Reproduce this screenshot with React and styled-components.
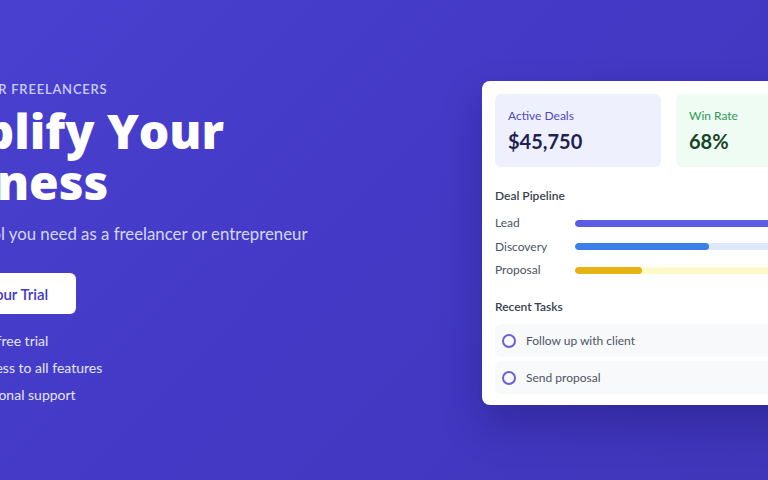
import React from "react";
import styled, { createGlobalStyle } from "styled-components";

const Global = createGlobalStyle`
  html, body { margin: 0; padding: 0; }
  body {
    font-family: Lato, "Open Sans", sans-serif;
    overflow: hidden;
  }
`;

const Hero = styled.section`
  width: 100vw;
  height: 480px;
  overflow: hidden;
  background: linear-gradient(135deg, #4a40cf 0%, #4339c6 50%, #3f36b9 100%);
  display: flex;
  align-items: center;
`;

const Container = styled.div`
  flex: none;
  display: flex;
  align-items: center;
  gap: 70px;
  margin-left: -108px;
  padding-top: 6px;
`;

const Left = styled.div`
  width: 520px;
  display: flex;
  flex-direction: column;
  align-items: flex-start;
`;

const Eyebrow = styled.div`
  font-size: 13px;
  line-height: 20px;
  font-weight: 600;
  letter-spacing: 0.06em;
  text-transform: uppercase;
  color: #c7cdfb;
`;

const Title = styled.h1`
  margin: 6px 0 0;
  font-family: "Open Sans", Lato, sans-serif;
  font-size: 48px;
  line-height: 51px;
  font-weight: 800;
  color: #ffffff;
`;

const Subtitle = styled.p`
  margin: 13px 0 0;
  font-size: 16.8px;
  line-height: 28px;
  color: #d4d8fb;
`;

const CTA = styled.button`
  margin-top: 25px;
  height: 41px;
  padding: 0 28px;
  display: flex;
  align-items: center;
  gap: 14px;
  border: none;
  border-radius: 6px;
  background: #ffffff;
  color: #4338ca;
  font-family: inherit;
  font-size: 15px;
  font-weight: 600;
  cursor: pointer;
`;

const Perks = styled.ul`
  list-style: none;
  margin: 15px 0 0;
  padding: 0 0 0 16px;
  display: flex;
  flex-direction: column;
  gap: 3px;
`;

const Perk = styled.li`
  display: flex;
  align-items: center;
  gap: 18px;
  font-size: 14px;
  line-height: 24px;
  color: #e4e7fd;
`;

const Check = () => (
  <svg width="24" height="24" viewBox="0 0 24 24" fill="none" stroke="#a5b4fc" strokeWidth="2.5" strokeLinecap="round" strokeLinejoin="round">
    <path d="M5 12.5l4.5 4.5L19 7.5" />
  </svg>
);

const Rocket = () => (
  <svg width="18" height="18" viewBox="0 0 24 24" fill="none" stroke="currentColor" strokeWidth="2" strokeLinecap="round" strokeLinejoin="round">
    <path d="M4.5 16.5c-1.5 1.3-2 5-2 5s3.7-.5 5-2c.7-.8.7-2.1-.1-2.9a2.2 2.2 0 0 0-2.9-.1z" />
    <path d="M12 15l-3-3a22 22 0 0 1 2-3.9A12.9 12.9 0 0 1 22 2c0 2.7-.8 7.5-6 11a22.4 22.4 0 0 1-4 2z" />
  </svg>
);

const Card = styled.div`
  width: 373px;
  box-sizing: border-box;
  background: #ffffff;
  border-radius: 8px;
  padding: 13px 13px 11px;
  box-shadow: 0 20px 40px rgba(20, 10, 90, 0.3);
  display: flex;
  flex-direction: column;
`;

const Stats = styled.div`
  display: grid;
  grid-template-columns: 1fr 1fr;
  gap: 15px;
`;

const Stat = styled.div`
  border-radius: 6px;
  padding: 13px;
  background: ${(p) => p.$bg};
`;

const StatLabel = styled.div`
  font-size: 12px;
  line-height: 18px;
  color: ${(p) => p.$color};
`;

const StatValue = styled.div`
  margin-top: 3px;
  font-size: 20px;
  line-height: 26px;
  font-weight: 700;
  color: ${(p) => p.$color};
`;

const SectionTitle = styled.div`
  margin-top: ${(p) => p.$mt}px;
  font-size: 12px;
  line-height: 18px;
  font-weight: 600;
  color: #374151;
`;

const Pipeline = styled.div`
  margin-top: 9px;
  display: flex;
  flex-direction: column;
  gap: 5.5px;
`;

const Stage = styled.div`
  display: grid;
  grid-template-columns: 80px 1fr;
  align-items: center;
  font-size: 12px;
  line-height: 18px;
  color: #4b5563;
`;

const Track = styled.div`
  height: 7px;
  border-radius: 999px;
  background: ${(p) => p.$bg};
  overflow: hidden;
`;

const Fill = styled.div`
  height: 100%;
  border-radius: 999px;
  background: ${(p) => p.$color};
`;

const Tasks = styled.div`
  margin-top: 8px;
  display: flex;
  flex-direction: column;
  gap: 4px;
`;

const Task = styled.div`
  height: 33px;
  display: flex;
  align-items: center;
  gap: 10px;
  padding: 0 7px;
  border-radius: 6px;
  background: #f8f9fb;
  font-size: 12px;
  color: #4b5563;
`;

const Circle = styled.span`
  width: 10px;
  height: 10px;
  border-radius: 50%;
  border: 2px solid #6a5fd8;
  flex: none;
`;

const stages = [
  { name: "Lead", pct: 75, color: "#5b5be3", bg: "#e0e7ff" },
  { name: "Discovery", pct: 50, color: "#3b7fe8", bg: "#dde9fb" },
  { name: "Proposal", pct: 25, color: "#e6b412", bg: "#fdf9c8" },
];

export default function App() {
  return (
    <>
      <Global />
      <Hero>
        <Container>
          <Left>
            <Eyebrow>Smart CRM for Freelancers</Eyebrow>
            <Title>
              Simplify Your
              <br />
              Business
            </Title>
            <Subtitle>The simple tool you need as a freelancer or entrepreneur</Subtitle>
            <CTA>
              <Rocket />
              Start Your Trial
            </CTA>
            <Perks>
              <Perk><Check />14-day free trial</Perk>
              <Perk><Check />Full access to all features</Perk>
              <Perk><Check />Professional support</Perk>
            </Perks>
          </Left>
          <Card>
            <Stats>
              <Stat $bg="#eef1fd">
                <StatLabel $color="#5247c9">Active Deals</StatLabel>
                <StatValue $color="#221f55">$45,750</StatValue>
              </Stat>
              <Stat $bg="#effcf3">
                <StatLabel $color="#2f9a55">Win Rate</StatLabel>
                <StatValue $color="#17452a">68%</StatValue>
              </Stat>
            </Stats>
            <SectionTitle $mt={20}>Deal Pipeline</SectionTitle>
            <Pipeline>
              {stages.map((s) => (
                <Stage key={s.name}>
                  <span>{s.name}</span>
                  <Track $bg={s.bg}>
                    <Fill $color={s.color} style={{ width: `${s.pct}%` }} />
                  </Track>
                </Stage>
              ))}
            </Pipeline>
            <SectionTitle $mt={19}>Recent Tasks</SectionTitle>
            <Tasks>
              <Task><Circle />Follow up with client</Task>
              <Task><Circle />Send proposal</Task>
            </Tasks>
          </Card>
        </Container>
      </Hero>
    </>
  );
}
